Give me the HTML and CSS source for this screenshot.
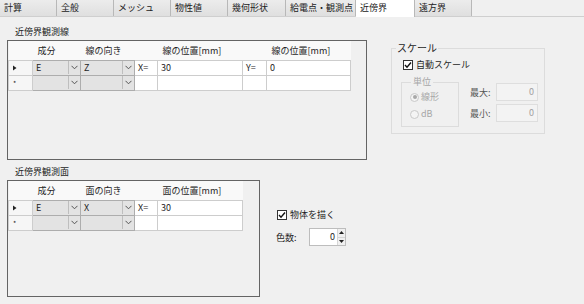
FILE: index.html
```html
<!DOCTYPE html>
<html lang="ja">
<head>
    <meta charset="UTF-8">
    <title>近傍界</title>
    <link rel="stylesheet" href="styles.css">
</head>
<body>
    <div class="tabs">
        <div class="tab">計算</div>
        <div class="tab">全般</div>
        <div class="tab">メッシュ</div>
        <div class="tab">物性値</div>
        <div class="tab geo">幾何形状</div>
        <div class="tab wide">給電点・観測点</div>
        <div class="tab active">近傍界</div>
        <div class="tab">遠方界</div>
    </div>

    <div class="row row-top">
        <div class="section section-line">
            <div class="caption">近傍界観測線</div>
            <div class="frame frame-line">
                <table class="grid grid-line">
                    <colgroup>
                        <col style="width:24px"><col style="width:48px"><col style="width:54px"><col style="width:23px">
                        <col style="width:85px"><col style="width:24px"><col style="width:84px">
                    </colgroup>
                    <thead>
                        <tr><th></th><th>成分</th><th>線の向き</th><th></th><th>線の位置[mm]</th><th></th><th>線の位置[mm]</th></tr>
                    </thead>
                    <tbody>
                        <tr>
                            <th class="rowhead"><svg width="4" height="6" viewBox="0 0 4 6"><path d="M0 0.5 L3.5 3 L0 5.5z" fill="#222"/></svg></th>
                            <td class="combo"><div class="cb"><span class="val">E</span><span class="arrow"><svg width="7" height="5" viewBox="0 0 7 5"><polyline points="0.5,0.8 3.5,3.8 6.5,0.8" fill="none" stroke="#555" stroke-width="1"/></svg></span></div></td>
                            <td class="combo"><div class="cb"><span class="val">Z</span><span class="arrow"><svg width="7" height="5" viewBox="0 0 7 5"><polyline points="0.5,0.8 3.5,3.8 6.5,0.8" fill="none" stroke="#555" stroke-width="1"/></svg></span></div></td>
                            <td>X=</td>
                            <td>30</td>
                            <td>Y=</td>
                            <td>0</td>
                        </tr>
                        <tr>
                            <th class="rowhead"><span class="star">*</span></th>
                            <td class="combo"><div class="cb"><span class="val"></span><span class="arrow"><svg width="7" height="5" viewBox="0 0 7 5"><polyline points="0.5,0.8 3.5,3.8 6.5,0.8" fill="none" stroke="#555" stroke-width="1"/></svg></span></div></td>
                            <td class="combo"><div class="cb"><span class="val"></span><span class="arrow"><svg width="7" height="5" viewBox="0 0 7 5"><polyline points="0.5,0.8 3.5,3.8 6.5,0.8" fill="none" stroke="#555" stroke-width="1"/></svg></span></div></td>
                            <td></td>
                            <td></td>
                            <td></td>
                            <td></td>
                        </tr>
                    </tbody>
                </table>
            </div>
        </div>

        <fieldset class="scale">
            <legend>スケール</legend>
            <label class="check auto">
                <span class="box"><svg width="8" height="8" viewBox="0 0 8 8"><polyline points="1,4 3,6.2 7,1.5" fill="none" stroke="#111" stroke-width="1.4"/></svg></span>
                自動スケール
            </label>
            <div class="unit-row">
                <fieldset class="unit">
                    <legend>単位</legend>
                    <div class="radio first"><span class="dot checked"></span>線形</div>
                    <div class="radio"><span class="dot"></span>dB</div>
                </fieldset>
                <div class="limits">
                    <div class="limit"><span class="limit-label">最大:</span><span class="num">0</span></div>
                    <div class="limit"><span class="limit-label">最小:</span><span class="num">0</span></div>
                </div>
            </div>
        </fieldset>
    </div>

    <div class="row row-bottom">
        <div class="section section-plane">
            <div class="caption">近傍界観測面</div>
            <div class="frame frame-plane">
                <table class="grid grid-plane">
                    <colgroup>
                        <col style="width:24px"><col style="width:48px"><col style="width:54px"><col style="width:23px"><col style="width:85px">
                    </colgroup>
                    <thead>
                        <tr><th></th><th>成分</th><th>面の向き</th><th></th><th>面の位置[mm]</th></tr>
                    </thead>
                    <tbody>
                        <tr>
                            <th class="rowhead"><svg width="4" height="6" viewBox="0 0 4 6"><path d="M0 0.5 L3.5 3 L0 5.5z" fill="#222"/></svg></th>
                            <td class="combo"><div class="cb"><span class="val">E</span><span class="arrow"><svg width="7" height="5" viewBox="0 0 7 5"><polyline points="0.5,0.8 3.5,3.8 6.5,0.8" fill="none" stroke="#555" stroke-width="1"/></svg></span></div></td>
                            <td class="combo"><div class="cb"><span class="val">X</span><span class="arrow"><svg width="7" height="5" viewBox="0 0 7 5"><polyline points="0.5,0.8 3.5,3.8 6.5,0.8" fill="none" stroke="#555" stroke-width="1"/></svg></span></div></td>
                            <td>X=</td>
                            <td>30</td>
                        </tr>
                        <tr>
                            <th class="rowhead"><span class="star">*</span></th>
                            <td class="combo"><div class="cb"><span class="val"></span><span class="arrow"><svg width="7" height="5" viewBox="0 0 7 5"><polyline points="0.5,0.8 3.5,3.8 6.5,0.8" fill="none" stroke="#555" stroke-width="1"/></svg></span></div></td>
                            <td class="combo"><div class="cb"><span class="val"></span><span class="arrow"><svg width="7" height="5" viewBox="0 0 7 5"><polyline points="0.5,0.8 3.5,3.8 6.5,0.8" fill="none" stroke="#555" stroke-width="1"/></svg></span></div></td>
                            <td></td>
                            <td></td>
                        </tr>
                    </tbody>
                </table>
            </div>
        </div>

        <div class="options">
            <label class="check">
                <span class="box"><svg width="8" height="8" viewBox="0 0 8 8"><polyline points="1,4 3,6.2 7,1.5" fill="none" stroke="#111" stroke-width="1.4"/></svg></span>
                物体を描く
            </label>
            <div class="colors">
                <span class="colors-label">色数:</span>
                <div class="spin">
                    <span class="spin-val">0</span>
                    <span class="spin-btns">
                        <span class="up"><svg width="5" height="3" viewBox="0 0 5 3"><path d="M0 3 L2.5 0 L5 3z" fill="#222"/></svg></span>
                        <span class="down"><svg width="5" height="3" viewBox="0 0 5 3"><path d="M0 0 L2.5 3 L5 0z" fill="#222"/></svg></span>
                    </span>
                </div>
            </div>
        </div>
    </div>
</body>
</html>
```

FILE: styles.css
```css
* {
    box-sizing: border-box;
}
body {
    margin: 0;
    width: 584px;
    height: 304px;
    overflow: hidden;
    background: #f0f0f0;
    font-family: "Noto Sans CJK JP", "Noto Sans", sans-serif;
    font-size: 9px;
    color: #1e1e1e;
}

/* tab strip */
.tabs {
    display: flex;
    height: 17px;
    border-bottom: 1px solid #cfcfcf;
}
.tab {
    width: 57px;
    height: 16px;
    line-height: 16px;
    padding-left: 4px;
    background: linear-gradient(#ececec, #dfdfdf);
    border-right: 1px solid #b8b8b8;
    color: #222;
}
.tab.geo { width: 58px; }
.tab.wide { width: 70px; }
.tab.active {
    width: 59px;
    height: 17px;
    background: #fff;
}

/* layout rows */
.row {
    display: flex;
    align-items: flex-start;
    padding-left: 7px;
}
.section {
    flex: none;
}
.section-line {
    width: 360px;
    margin-top: 9px;
}
.section-plane {
    width: 253px;
}
.row-bottom {
    margin-top: 6px;
}
.caption {
    line-height: 12px;
    padding-left: 8px;
    margin-bottom: 2px;
}
.frame {
    border: 1px solid #646464;
}
.frame-line { height: 120px; }
.frame-plane { height: 117px; }

/* data grid */
.grid {
    border-collapse: collapse;
    table-layout: fixed;
}
.grid-line { width: 342px; }
.grid-plane { width: 234px; }
.grid th,
.grid td {
    padding: 0 0 0 3px;
    text-align: left;
    font-weight: normal;
    white-space: nowrap;
    overflow: hidden;
    line-height: 13px;
}
.grid thead th {
    height: 19px;
    padding-left: 5px;
    background: #f9f9f9;
}
.grid tbody tr {
    height: 15px;
}
.grid tbody td,
.grid tbody th {
    border: 1px solid #cdcdcd;
    background: #fff;
}
.grid tbody th.rowhead {
    background: #f6f6f6;
    padding-left: 4px;
}
.rowhead svg {
    display: block;
}
.star {
    font-size: 7px;
    line-height: 9px;
    display: block;
    padding-top: 2px;
}
.grid td.combo {
    padding: 0;
    background: #e3e3e3;
    border-color: #adadad;
}
.cb {
    display: flex;
    height: 13px;
}
.cb .val {
    flex: 1;
    padding-left: 3px;
}
.cb .arrow {
    width: 12px;
    border-left: 1px solid #bebebe;
    display: flex;
    align-items: center;
    justify-content: center;
}

/* checkboxes */
.check {
    display: flex;
    align-items: center;
    line-height: 12px;
}
.check .box {
    width: 10px;
    height: 10px;
    border: 1px solid #333;
    background: #fff;
    margin-right: 3px;
    display: flex;
    align-items: center;
    justify-content: center;
}

/* scale group */
.scale {
    flex: none;
    width: 154px;
    height: 92px;
    margin: 25px 0 0 24px;
    padding: 0;
    border: 1px solid #dcdcdc;
    min-width: 0;
}
.scale > legend {
    margin-left: 4px;
    padding: 0 1px;
    line-height: 12px;
    font-size: 10px;
}
.check.auto {
    margin: 5px 0 0 11px;
}
.unit-row {
    display: flex;
    margin-top: 5px;
}
.unit {
    width: 58px;
    height: 51px;
    margin: 0 0 0 9px;
    padding: 0 0 0 8px;
    border: 1px solid #dcdcdc;
    color: #a6a6a6;
    min-width: 0;
}
.unit legend {
    margin-left: 1px;
    padding: 0 2px;
    line-height: 12px;
}
.radio {
    display: flex;
    align-items: center;
    line-height: 12px;
    margin-top: 5px;
}
.radio.first {
    margin-top: 3px;
}
.dot {
    width: 9px;
    height: 9px;
    border: 1px solid #c9c9c9;
    border-radius: 50%;
    background: #f4f4f4;
    margin-right: 2px;
    display: flex;
    align-items: center;
    justify-content: center;
}
.dot.checked::after {
    content: "";
    width: 4px;
    height: 4px;
    border-radius: 50%;
    background: #a8a8a8;
}
.limits {
    margin: 7px 0 0 11px;
}
.limit {
    display: flex;
    align-items: center;
    margin-bottom: 3px;
}
.limit-label {
    width: 26px;
    color: #555;
}
.num {
    width: 42px;
    height: 18px;
    line-height: 16px;
    border: 1px solid #dedede;
    background: #f3f3f3;
    color: #a0a0a0;
    text-align: right;
    padding-right: 3px;
}

/* lower right options */
.options {
    margin: 43px 0 0 16px;
}
.options .check {
    padding-left: 1px;
}
.colors {
    display: flex;
    align-items: center;
    margin-top: 7px;
}
.colors-label {
    width: 33px;
}
.spin {
    display: flex;
    width: 37px;
    height: 18px;
    border: 1px solid #bdbdbd;
    background: #fff;
}
.spin-val {
    flex: 1;
    text-align: right;
    padding-right: 2px;
    line-height: 16px;
}
.spin-btns {
    width: 8px;
    display: flex;
    flex-direction: column;
    background: #f0f0f0;
    border-left: 1px solid #d6d6d6;
}
.spin-btns span {
    flex: 1;
    display: flex;
    align-items: center;
    justify-content: center;
}
.spin-btns .up {
    border-bottom: 1px solid #d6d6d6;
}
```
